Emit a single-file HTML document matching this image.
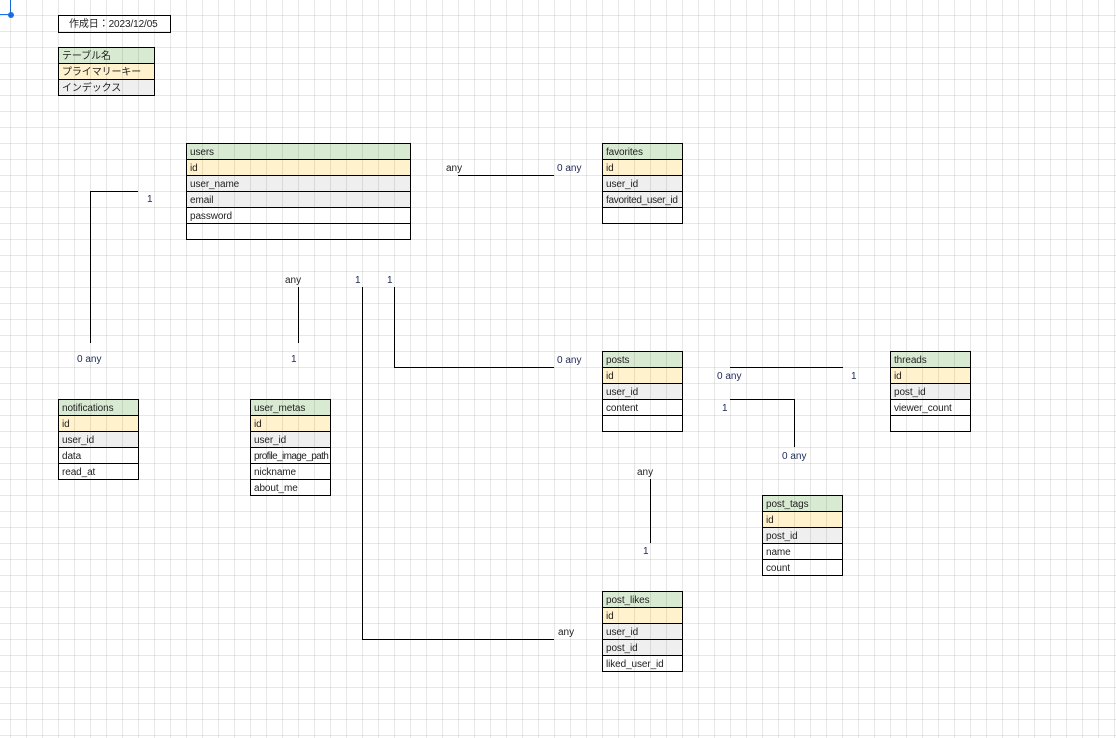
<!DOCTYPE html>
<html><head><meta charset="utf-8"><style>
body{margin:0;width:1116px;height:738px;overflow:hidden;background:#fff;position:relative;font-family:"Liberation Sans","Noto Sans CJK JP",sans-serif;font-size:10px;color:#222}
.grid{position:absolute;left:0;top:0;width:1116px;height:738px;pointer-events:none;z-index:5;
background-image:linear-gradient(to right,rgba(0,0,0,0.09) 1px,transparent 1px),linear-gradient(to bottom,rgba(0,0,0,0.09) 1px,transparent 1px);
background-size:16px 16px;background-position:10px 15px}
.t{position:absolute;border-left:1px solid #000;border-top:1px solid #000;box-sizing:border-box}
.t div{height:16px;line-height:17px;border-right:1px solid #000;border-bottom:1px solid #000;box-sizing:border-box;padding-left:3px;white-space:nowrap;overflow:visible;letter-spacing:-0.1px}
.g{background:#d9ead3}.y{background:#fff2cc}.e{background:#efefef}
.l{position:absolute;background:#000;z-index:2}
.lb{position:absolute;color:#1c2a5a;font-size:10px;line-height:14px;z-index:3}
</style></head><body>
<div class="l" style="left:10px;top:0;width:1px;height:15px;background:#1a73e8"></div>
<div class="l" style="left:0;top:14px;width:10px;height:1px;background:#1a73e8"></div>
<div style="position:absolute;left:8px;top:12px;width:6px;height:6px;border-radius:50%;background:#1a73e8"></div>

<div class="t" style="left:58px;top:15px;width:113px"><div style="height:17px;line-height:17px;padding-left:10px">作成日：2023/12/05</div></div>
<div class="t" style="left:58px;top:47px;width:97px"><div class="g">テーブル名</div><div class="y">プライマリーキー</div><div class="e">インデックス</div></div>

<div class="t" style="left:186px;top:143px;width:225px"><div class="g">users</div><div class="y">id</div><div class="e">user_name</div><div class="e">email</div><div>password</div><div></div></div>
<div class="t" style="left:602px;top:143px;width:81px"><div class="g">favorites</div><div class="y">id</div><div class="e">user_id</div><div class="e" style="letter-spacing:-0.3px">favorited_user_id</div><div></div></div>
<div class="t" style="left:58px;top:399px;width:81px"><div class="g">notifications</div><div class="y">id</div><div class="e">user_id</div><div>data</div><div>read_at</div></div>
<div class="t" style="left:250px;top:399px;width:81px"><div class="g">user_metas</div><div class="y">id</div><div class="e">user_id</div><div style="letter-spacing:-0.6px">profile_image_path</div><div>nickname</div><div>about_me</div></div>
<div class="t" style="left:602px;top:351px;width:81px"><div class="g">posts</div><div class="y">id</div><div class="e">user_id</div><div>content</div><div></div></div>
<div class="t" style="left:890px;top:351px;width:81px"><div class="g">threads</div><div class="y">id</div><div class="e">post_id</div><div>viewer_count</div><div></div></div>
<div class="t" style="left:762px;top:495px;width:81px"><div class="g">post_tags</div><div class="y">id</div><div class="e">post_id</div><div>name</div><div>count</div></div>
<div class="t" style="left:602px;top:591px;width:81px"><div class="g">post_likes</div><div class="y">id</div><div class="e">user_id</div><div class="e">post_id</div><div>liked_user_id</div></div>

<div class="l" style="left:458px;top:175px;width:96px;height:1px"></div>
<div class="lb" style="left:446px;top:162px;color:#222">any</div><div class="lb" style="left:557px;top:162px">0 any</div>

<div class="l" style="left:90px;top:191px;width:1px;height:152px"></div>
<div class="l" style="left:90px;top:191px;width:48px;height:1px"></div>
<div class="lb" style="left:147px;top:193px">1</div><div class="lb" style="left:77px;top:353px">0 any</div>

<div class="l" style="left:298px;top:287px;width:1px;height:56px"></div>
<div class="lb" style="left:285px;top:274px;color:#222">any</div><div class="lb" style="left:291px;top:353px">1</div>

<div class="l" style="left:362px;top:287px;width:1px;height:352px"></div>
<div class="l" style="left:362px;top:639px;width:192px;height:1px"></div>
<div class="lb" style="left:355px;top:274px">1</div><div class="lb" style="left:558px;top:626px;color:#222">any</div>

<div class="l" style="left:394px;top:287px;width:1px;height:80px"></div>
<div class="l" style="left:394px;top:367px;width:160px;height:1px"></div>
<div class="lb" style="left:387px;top:274px">1</div><div class="lb" style="left:557px;top:354px">0 any</div>

<div class="l" style="left:730px;top:367px;width:113px;height:1px"></div>
<div class="lb" style="left:717px;top:370px">0 any</div><div class="lb" style="left:851px;top:370px">1</div>

<div class="l" style="left:730px;top:399px;width:65px;height:1px"></div>
<div class="l" style="left:794px;top:399px;width:1px;height:48px"></div>
<div class="lb" style="left:722px;top:402px">1</div><div class="lb" style="left:782px;top:450px">0 any</div>

<div class="l" style="left:650px;top:479px;width:1px;height:64px"></div>
<div class="lb" style="left:637px;top:466px;color:#222">any</div><div class="lb" style="left:643px;top:545px">1</div>

<div class="grid"></div>
</body></html>
